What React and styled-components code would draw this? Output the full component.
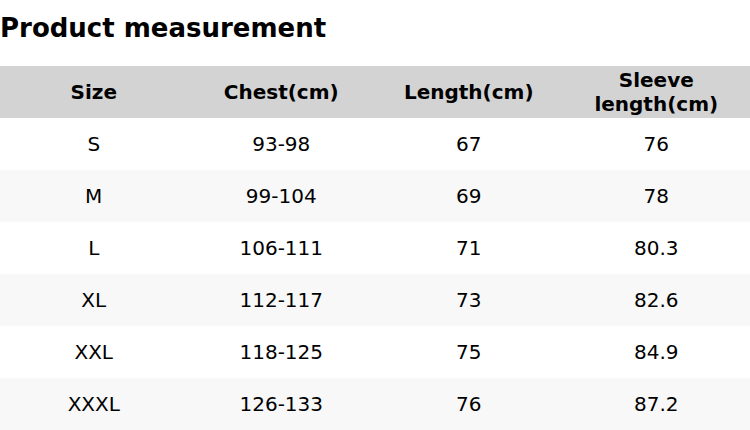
import React from "react";
import styled, { createGlobalStyle } from "styled-components";

const Global = createGlobalStyle`
  html, body { margin: 0; padding: 0; background: #fff; }
  body { font-family: "DejaVu Sans", "Liberation Sans", sans-serif; color: #000; }
`;

const Page = styled.div`
  width: 750px;
`;

const Title = styled.h1`
  margin: 0;
  padding-top: 13px;
  margin-bottom: 23px;
  font-size: 26px;
  line-height: 30px;
  font-weight: bold;
`;

const Table = styled.div`
  display: grid;
  grid-template-columns: repeat(4, 1fr);
`;

const Row = styled.div`
  display: contents;
`;

const Cell = styled.div`
  height: 52px;
  display: flex;
  align-items: center;
  justify-content: center;
  text-align: center;
  font-size: 20px;
  line-height: 24px;
  font-weight: ${(p) => (p.$head ? "bold" : "normal")};
  background: ${(p) => (p.$head ? "#d3d3d3" : p.$alt ? "#f8f8f8" : "#fff")};
  padding: 0 10px;
`;

const headers = ["Size", "Chest(cm)", "Length(cm)", "Sleeve length(cm)"];
const rows = [
  ["S", "93-98", "67", "76"],
  ["M", "99-104", "69", "78"],
  ["L", "106-111", "71", "80.3"],
  ["XL", "112-117", "73", "82.6"],
  ["XXL", "118-125", "75", "84.9"],
  ["XXXL", "126-133", "76", "87.2"],
];

export default function App() {
  return (
    <Page>
      <Global />
      <Title>Product measurement</Title>
      <Table>
        <Row>
          {headers.map((h) => (
            <Cell key={h} $head>
              {h}
            </Cell>
          ))}
        </Row>
        {rows.map((r, i) => (
          <Row key={r[0]}>
            {r.map((c, j) => (
              <Cell key={j} $alt={i % 2 === 1}>
                {c}
              </Cell>
            ))}
          </Row>
        ))}
      </Table>
    </Page>
  );
}
